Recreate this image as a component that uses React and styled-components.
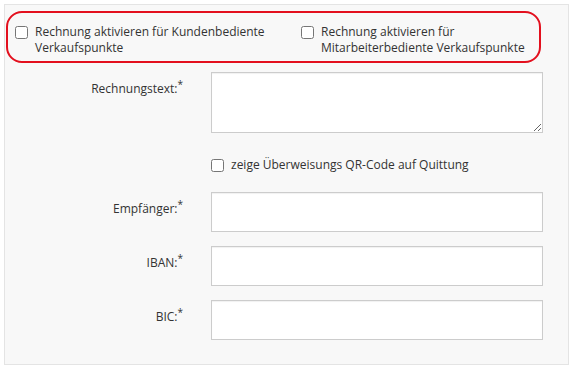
import React from 'react';
import styled, { createGlobalStyle } from 'styled-components';

const GlobalStyle = createGlobalStyle`
  body {
    margin: 0;
    background: #fff;
    font-family: "Open Sans", "Liberation Sans", sans-serif;
    font-size: 12px;
    color: #333;
  }
`;

export default function App() {
  return (
    <Page>
      <GlobalStyle />
      <Panel>
        <Highlight>
          <CheckOption>
            <Check type="checkbox" />
            <OptionText>Rechnung aktivieren für Kundenbediente Verkaufspunkte</OptionText>
          </CheckOption>
          <CheckOption>
            <Check type="checkbox" />
            <OptionText>Rechnung aktivieren für Mitarbeiterbediente Verkaufspunkte</OptionText>
          </CheckOption>
        </Highlight>

        <Form>
          <Row>
            <Label>Rechnungstext:<Req>*</Req></Label>
            <TextArea />
          </Row>
          <QrRow>
            <span />
            <CheckOption>
              <Check type="checkbox" />
              <OptionText>zeige Überweisungs QR-Code auf Quittung</OptionText>
            </CheckOption>
          </QrRow>
          <Row>
            <Label>Empfänger:<Req>*</Req></Label>
            <Input />
          </Row>
          <Row>
            <Label>IBAN:<Req>*</Req></Label>
            <Input />
          </Row>
          <Row>
            <Label>BIC:<Req>*</Req></Label>
            <Input />
          </Row>
        </Form>
      </Panel>
    </Page>
  );
}

const Page = styled.div`
  padding: 4px;
`;

const Panel = styled.div`
  box-sizing: border-box;
  width: 565px;
  height: 361px;
  background: #f8f8f8;
  border: 1px solid #e4e4e4;
  padding: 6px 0 0 1px;
`;

const Highlight = styled.div`
  box-sizing: border-box;
  width: 535px;
  height: 52px;
  border: 2px solid #e3101e;
  border-radius: 16px;
  padding: 11px 8px 0 7px;
  display: grid;
  grid-template-columns: 279px 1fr;
  column-gap: 7px;
`;

const CheckOption = styled.label`
  display: flex;
  align-items: flex-start;
  gap: 7px;
  line-height: 16px;
`;

const Check = styled.input`
  flex: none;
  width: 13px;
  height: 13px;
  margin: 2px 0 0;
`;

const OptionText = styled.span`
  color: #333;
`;

const Form = styled.div`
  display: flex;
  flex-direction: column;
  gap: 14px;
  margin-top: 9px;
`;

const Row = styled.div`
  display: grid;
  grid-template-columns: 177px 332px;
  column-gap: 28px;
  align-items: start;
`;

const QrRow = styled(Row)`
  margin: 10px 0 5px;
`;

const Label = styled.div`
  text-align: right;
  padding-top: 9px;
  line-height: 16px;
`;

const Req = styled.sup`
  font-size: 10px;
  line-height: 0;
  vertical-align: 5px;
`;

const fieldStyle = `
  box-sizing: border-box;
  width: 332px;
  margin: 0;
  background: #fff;
  border: 1px solid #cccccc;
  box-shadow: inset 0 1px 1px rgba(0, 0, 0, 0.06);
  font-family: inherit;
  font-size: 12px;
  outline: none;
`;

const TextArea = styled.textarea`
  ${fieldStyle}
  display: block;
  height: 61px;
`;

const Input = styled.input`
  ${fieldStyle}
  display: block;
  height: 40px;
`;
